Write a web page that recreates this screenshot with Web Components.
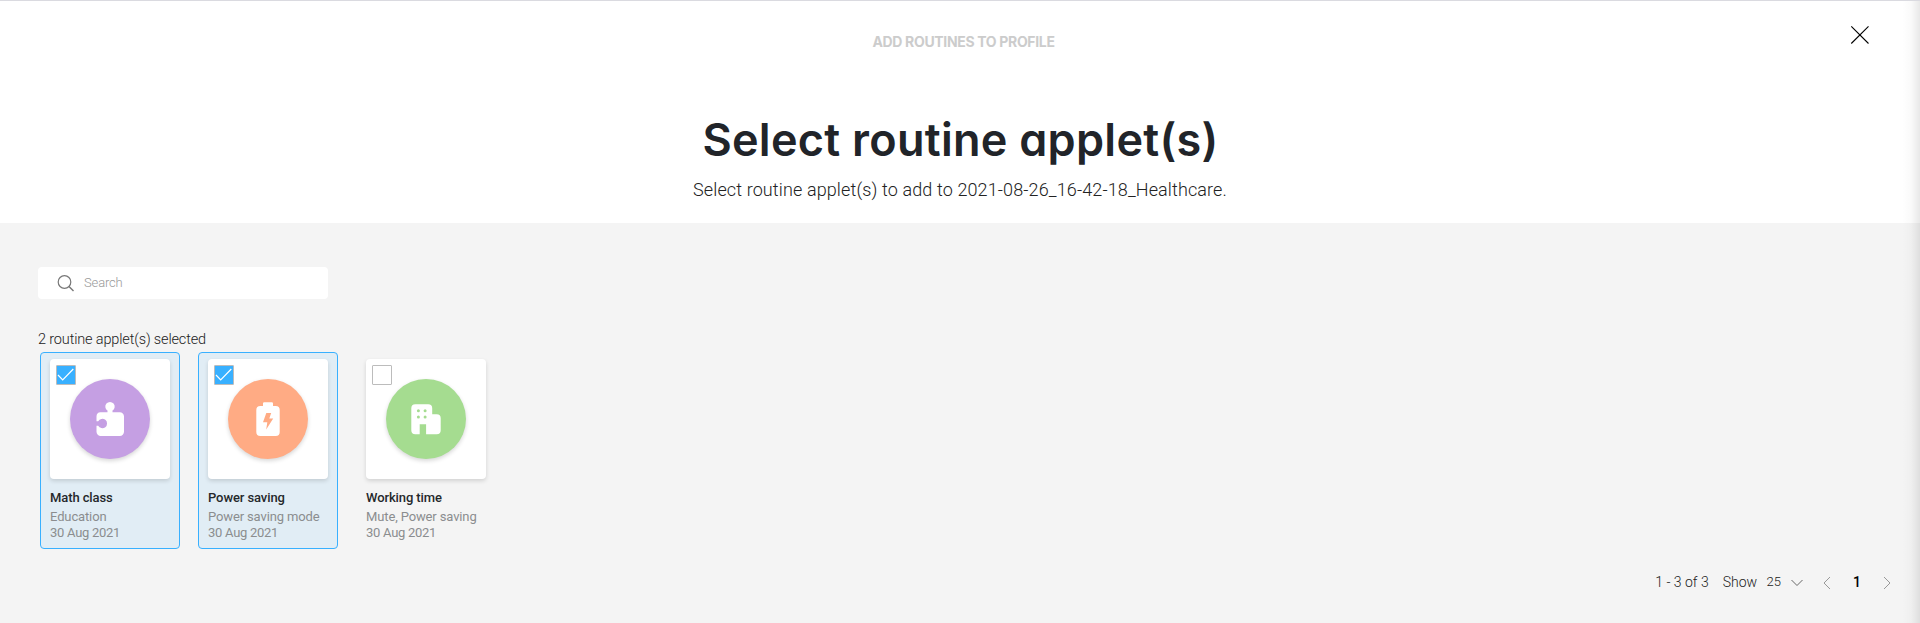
<!DOCTYPE html>
<html lang="en">
<head>
<meta charset="utf-8">
<title>Select routine applet(s)</title>
<style>
html,body{margin:0;height:100%;background:#f4f4f4}
body{font-family:Roboto,"Noto Sans",sans-serif;color:#222}
</style>
</head>
<body>
<routine-dialog></routine-dialog>
<script>
const define=(name,css,html,setup)=>customElements.define(name,class extends HTMLElement{
  constructor(){super();this.attachShadow({mode:'open'}).innerHTML=`<style>*{box-sizing:border-box}${css}</style>${html}`;}
  connectedCallback(){if(setup)setup.call(this,this.shadowRoot);}
});
const glyphs={
 puzzle:{color:'#c59fe3',svg:`<path fill="#fff" d="M30.500 33.300H37.500V31.600A4.700 4.700 0 1 1 42.500 31.600V33.300H49.800A4.200 4.200 0 0 1 54 37.500V52.800A4.200 4.200 0 0 1 49.800 57H30.700A4.200 4.200 0 0 1 26.500 52.800V46.700H28.200A4.700 4.700 0 1 0 28.200 42.300H26.500V37.500A4.200 4.200 0 0 1 30.500 33.300Z"/>`},
 battery:{color:'#ffab84',svg:`<path fill="#fff" fill-rule="evenodd" d="M36.200 23.300H43.800Q45 23.300 45 24.500V27H47.700A4 4 0 0 1 51.700 31V53A4 4 0 0 1 47.700 57H32.300A4 4 0 0 1 28.300 53V31A4 4 0 0 1 32.300 27H35V24.500Q35 23.300 36.200 23.300ZM38.300 34L35 43.200H39.300L38.200 50.500L45.200 39.600H41.300L43.200 34Z"/>`},
 building:{color:'#a5dc90',svg:`<path fill="#fff" d="M29.300 25.200H42.200A4 4 0 0 1 46.200 29.200V35.300H50.700A4 4 0 0 1 54.700 39.300V51.300A4 4 0 0 1 50.700 55.300H40.100V45.300H33.700V55.300H29.300A4 4 0 0 1 25.300 51.300V29.200A4 4 0 0 1 29.300 25.200Z"/><g fill="#a5dc90"><circle cx="32.400" cy="31.800" r="1.500"/><circle cx="39.100" cy="31.800" r="1.500"/><circle cx="32.400" cy="38" r="1.500"/><circle cx="39.100" cy="38" r="1.500"/></g>`}
};
define('select-box',`:host{display:block;width:20px;height:20px}
 div{width:20px;height:20px;border:1px solid #bcbcbc;border-radius:1px;background:#fff}
 svg{display:none;width:18px;height:18px}
 :host([checked]) div{background:#38b0ff}:host([checked]) svg{display:block}`,
 `<div><svg viewBox="1 1 18 18"><path d="M2 10L6.700 15L17.300 4" fill="none" stroke="#fff" stroke-width="1.200"/></svg></div>`);
define('applet-icon',`:host{display:block;width:80px;height:80px;border-radius:50%;box-shadow:0 2px 4px rgba(0,0,0,.16)}svg{display:block}`,
 `<svg width="80" height="80" viewBox="0 0 80 80"></svg>`,function(r){
 const g=glyphs[this.getAttribute('name')];this.style.background=g.color;r.querySelector('svg').innerHTML=g.svg;});
define('applet-card',`:host{display:block;width:140px;height:197px;border:1px solid transparent;border-radius:4px;padding:6px 9px}
 :host([checked]){border-color:#38b0ff;background:#e1edf5}
 .tile{position:relative;width:120px;height:120px;border-radius:4px;background:#fff;box-shadow:0 2px 4px rgba(0,0,0,.14);display:grid;place-items:center}
 select-box{position:absolute;left:6px;top:6px}
 .t{display:block;white-space:nowrap;font-size:13px}
 .name{font-weight:500;line-height:18px;margin-top:10px;color:#25282b;letter-spacing:-.1px}
 .sub{line-height:16px;color:#8b8d8f;letter-spacing:-.13px}.kind{margin-top:2px}.date{letter-spacing:-.28px}`,
 `<div class="tile"><select-box></select-box></div>
 <div class="t name"><slot name="name"></slot></div><div class="t sub kind"><slot name="kind"></slot></div><div class="t sub date"><slot name="date"></slot></div>`,
 function(r){if(this.hasAttribute('checked'))r.querySelector('select-box').setAttribute('checked','');
 const i=document.createElement('applet-icon');i.setAttribute('name',this.getAttribute('icon'));r.querySelector('.tile').prepend(i);});
define('dialog-header',`:host{display:flex;flex-direction:column;align-items:center;position:relative;height:223px;background:#fff;border-top:1px solid #dadae0}
 .step{margin-top:32px;font:700 14px/18px Inter,sans-serif;letter-spacing:-.33px;color:#ccc;padding-left:7px}
 h1{margin:61px 0 0;padding-left:1px;font:600 45px/56px Inter,sans-serif;letter-spacing:.28px;font-feature-settings:"cv11";color:#212429;white-space:nowrap}
 p{margin:9px 0 0;font-size:18px;line-height:26px;font-weight:300;letter-spacing:.12px;color:#222;white-space:nowrap}
 svg{position:absolute;left:1850px;top:24px}`,
 `<div class="step">ADD ROUTINES TO PROFILE</div><h1>Select routine applet(s)</h1><p>Select routine applet(s) to add to 2021-08-26_16-42-18_Healthcare.</p>
 <svg width="20" height="20"><path d="M1.300 1.300L18.500 18.500M18.500 1.300L1.300 18.500" stroke="#000" stroke-width="1.100"/></svg>`);
define('search-field',`:host{display:flex;align-items:center;width:290px;height:32px;border-radius:4px;background:#fff;padding-left:19px;font-size:13px;font-weight:300;color:#999}
 svg{margin-right:10px}span{padding-bottom:2px;letter-spacing:-.15px}`,
 `<svg width="17" height="17"><circle cx="7.500" cy="7" r="6.300" fill="none" stroke="#777" stroke-width="1.200"/><path d="M12 11.500L16.500 16" stroke="#777" stroke-width="1.400"/></svg><span>Search</span>`);
define('page-nav',`:host{display:flex;align-items:center;justify-content:flex-end;height:24px;font-size:14px;font-weight:300;line-height:24px;color:#222;padding-right:29px}
 .r{margin-right:14px}.s{margin-right:9.500px}.n{font-size:13px;margin-right:10px}.c{width:52px;text-align:center;font-weight:500;font-size:14px;color:#000}svg{display:block;margin-top:2px}.prev{margin-left:20px}`,
 `<span class="r">1 - 3 of 3</span><span class="s">Show</span><span class="n">25</span>
 <svg width="12" height="8"><path d="M.500 1L6 6.500L11.500 1" fill="none" stroke="#666"/></svg>
 <svg class="prev" width="8" height="14"><path d="M7 1L1 7L7 13" fill="none" stroke="#999"/></svg><span class="c">1</span>
 <svg width="8" height="14"><path d="M1 1L7 7L1 13" fill="none" stroke="#999"/></svg>`);
define('routine-dialog',`:host{display:block;position:relative;width:1920px;height:623px;background:#f4f4f4;overflow:hidden}
 main{padding:44px 0 0 38px}
 .count{margin-top:30px;font-size:14.500px;line-height:22px;font-weight:300;letter-spacing:-.15px}
 .cards{display:flex;gap:18px;margin:1px 0 0 2px}
 page-nav{margin-top:21px}
 .edge{position:absolute;right:0;top:1px;bottom:0;width:18px;background:linear-gradient(90deg,rgba(0,0,0,0),rgba(0,0,0,.02) 50%,rgba(0,0,0,.09));pointer-events:none}`,
 `<dialog-header></dialog-header><main><search-field></search-field><div class="count">2 routine applet(s) selected</div>
 <div class="cards">
 <applet-card checked icon="puzzle"><span slot="name">Math class</span><span slot="kind">Education</span><span slot="date">30 Aug 2021</span></applet-card>
 <applet-card checked icon="battery"><span slot="name">Power saving</span><span slot="kind">Power saving mode</span><span slot="date">30 Aug 2021</span></applet-card>
 <applet-card icon="building"><span slot="name">Working time</span><span slot="kind">Mute, Power saving</span><span slot="date">30 Aug 2021</span></applet-card>
 </div><page-nav></page-nav></main><div class="edge"></div>`);
</script>
</body>
</html>
